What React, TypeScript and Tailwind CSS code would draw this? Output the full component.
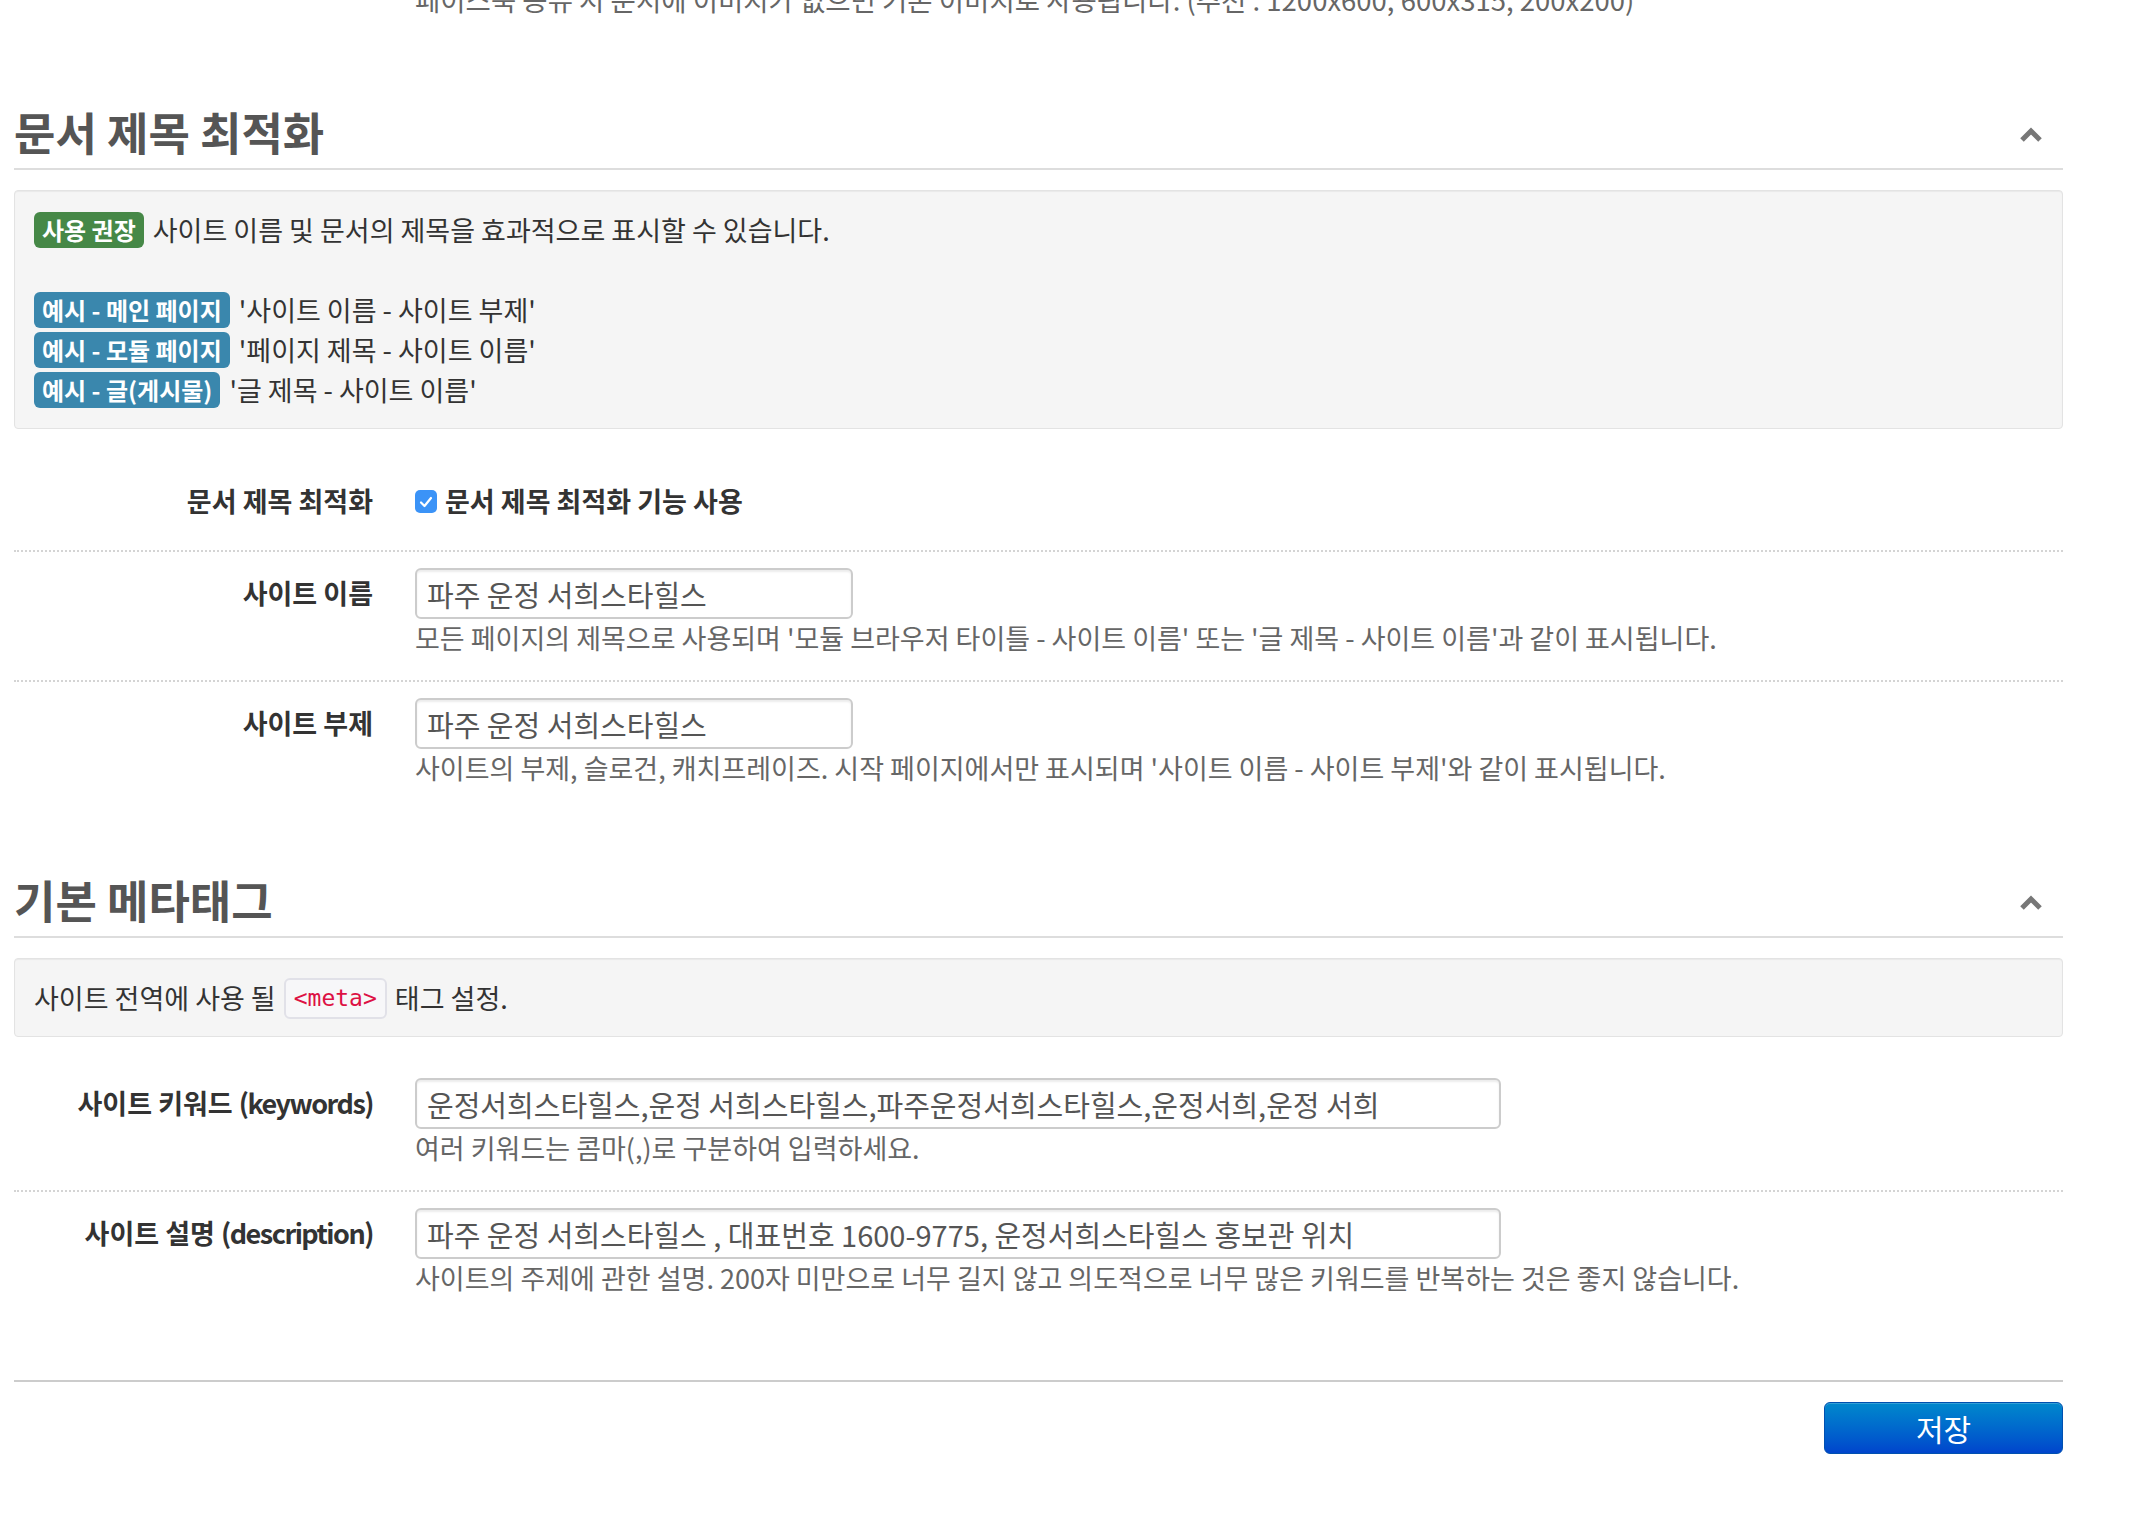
import type { ReactNode } from 'react';
import clsx from 'clsx';

function Chevron() {
  return (
    <svg width="22" height="15" viewBox="0 0 22 15" className="mr-[21px] mt-[5px]">
      <path d="M2 13 L11 4 L20 13" fill="none" stroke="#777" strokeWidth="5" />
    </svg>
  );
}

function SectionTitle({ title, className }: { title: string; className?: string }) {
  return (
    <div className={clsx('flex items-center justify-between border-b-2 border-[#ddd] pb-[12px]', className)}>
      <h2 className="text-[45px] leading-[48px] font-bold text-[#555]">{title}</h2>
      <Chevron />
    </div>
  );
}

function Label({ color, children }: { color: string; children: ReactNode }) {
  return (
    <span
      className={clsx(
        'inline-flex h-[36px] items-center rounded-[6px] px-[8px] text-[24px] font-bold text-white',
        color
      )}
    >
      {children}
    </span>
  );
}

function Row({
  label,
  help,
  last,
  children,
}: {
  label: ReactNode;
  help?: string;
  last?: boolean;
  children: ReactNode;
}) {
  return (
    <div className={clsx('flex pt-[16px] pb-[23px]', !last && 'border-b-2 border-dotted border-[#d4d4d4]')}>
      <div className="flex h-[51px] w-[359px] shrink-0 items-center justify-end whitespace-pre text-[27px] font-bold text-[#333]">
        {label}
      </div>
      <div className="ml-[42px] flex-1">
        {children}
        {help && <p className="text-[27px] leading-[38px] text-[#666]">{help}</p>}
      </div>
    </div>
  );
}

function TextInput({ value, wide }: { value: string; wide?: boolean }) {
  return (
    <input
      type="text"
      defaultValue={value}
      className={clsx(
        'block h-[51px] rounded-[6px] border-2 border-[#ccc] bg-white px-[10px] text-[29px] text-[#555] outline-none',
        'shadow-[inset_0_2px_2px_rgba(0,0,0,0.075)]',
        wide ? 'w-[1086px]' : 'w-[438px]'
      )}
    />
  );
}

export default function App() {
  return (
    <div className="min-h-screen overflow-hidden bg-white font-['Noto_Sans_CJK_KR',sans-serif]">
      <div className="ml-[14px] w-[2049px]">
        <p className="-mt-[20px] ml-[401px] text-[27.5px] leading-[38px] text-[#666]">
          페이스북 공유 시 문서에 이미지가 없으면 기본 이미지로 사용됩니다. (추천 : 1200x600, 600x315, 200x200)
        </p>

        <SectionTitle title="문서 제목 최적화" className="mt-[90px]" />

        <div className="mt-[20px] rounded-[4px] border border-[#e3e3e3] bg-[#f5f5f5] px-[19px] pt-[19px] pb-[18px] text-[27px] text-[#333] shadow-[inset_0_1px_1px_rgba(0,0,0,0.05)]">
          <div className="flex h-[40px] items-center gap-[9px]">
            <Label color="bg-[#468847]">사용 권장</Label>
            <span>사이트 이름 및 문서의 제목을 효과적으로 표시할 수 있습니다.</span>
          </div>
          <div className="h-[40px]" />
          <div className="flex h-[40px] items-center gap-[9px]">
            <Label color="bg-[#3a87ad]">예시 - 메인 페이지</Label>
            <span>'사이트 이름 - 사이트 부제'</span>
          </div>
          <div className="flex h-[40px] items-center gap-[9px]">
            <Label color="bg-[#3a87ad]">예시 - 모듈 페이지</Label>
            <span>'페이지 제목 - 사이트 이름'</span>
          </div>
          <div className="flex h-[40px] items-center gap-[9px]">
            <Label color="bg-[#3a87ad]">예시 - 글(게시물)</Label>
            <span>'글 제목 - 사이트 이름'</span>
          </div>
        </div>

        <div className="mt-[31px]">
          <Row label="문서 제목 최적화">
            <label className="flex h-[51px] items-center text-[27px] font-bold text-[#333]">
              <span className="flex h-[23px] w-[22px] items-center justify-center rounded-[5px] bg-[#3b93f7]">
                <svg width="14" height="12" viewBox="0 0 14 12">
                  <path d="M2 6.5 L5.5 10 L12 2" fill="none" stroke="#fff" strokeWidth="2.2" strokeLinecap="round" strokeLinejoin="round" />
                </svg>
              </span>
              <span className="ml-[8px]">문서 제목 최적화 기능 사용</span>
            </label>
          </Row>
          <Row
            label="사이트 이름"
            help="모든 페이지의 제목으로 사용되며 '모듈 브라우저 타이틀 - 사이트 이름' 또는 '글 제목 - 사이트 이름'과 같이 표시됩니다."
          >
            <TextInput value="파주 운정 서희스타힐스" />
          </Row>
          <Row
            label="사이트 부제"
            help="사이트의 부제, 슬로건, 캐치프레이즈. 시작 페이지에서만 표시되며 '사이트 이름 - 사이트 부제'와 같이 표시됩니다."
            last
          >
            <TextInput value="파주 운정 서희스타힐스" />
          </Row>
        </div>

        <SectionTitle title="기본 메타태그" className="mt-[66px]" />

        <div className="mt-[20px] rounded-[4px] border border-[#e3e3e3] bg-[#f5f5f5] px-[19px] pt-[19px] pb-[18px] text-[27px] text-[#333] shadow-[inset_0_1px_1px_rgba(0,0,0,0.05)]">
          <div className="flex h-[40px] items-center">
            <span>사이트 전역에 사용 될</span>
            <code className="mx-[8px] flex h-[41px] items-center rounded-[6px] border-2 border-[#e1e1e8] bg-[#f7f7f9] px-[8px] font-['DejaVu_Sans_Mono',monospace] text-[23px] text-[#dd1144]">
              &lt;meta&gt;
            </code>
            <span>태그 설정.</span>
          </div>
        </div>

        <div className="mt-[25px]">
          <Row
            label={<>사이트 키워드 <span className="tracking-[-1.5px]">(keywords)</span></>}
            help="여러 키워드는 콤마(,)로 구분하여 입력하세요."
          >
            <TextInput wide value="운정서희스타힐스,운정 서희스타힐스,파주운정서희스타힐스,운정서희,운정 서희" />
          </Row>
          <Row
            label={<>사이트 설명 <span className="tracking-[-1.5px]">(description)</span></>}
            help="사이트의 주제에 관한 설명. 200자 미만으로 너무 길지 않고 의도적으로 너무 많은 키워드를 반복하는 것은 좋지 않습니다."
            last
          >
            <TextInput wide value="파주 운정 서희스타힐스 , 대표번호 1600-9775, 운정서희스타힐스 홍보관 위치" />
          </Row>
        </div>

        <div className="mt-[60px] flex justify-end border-t-2 border-[#ccc] pt-[20px]">
          <button className="h-[52px] w-[239px] rounded-[6px] border border-[#0050b0] bg-linear-to-b from-[#0088cc] to-[#0044cc] text-[30px] text-white shadow-[inset_0_1px_0_rgba(255,255,255,0.2)]">
            저장
          </button>
        </div>
      </div>
    </div>
  );
}
